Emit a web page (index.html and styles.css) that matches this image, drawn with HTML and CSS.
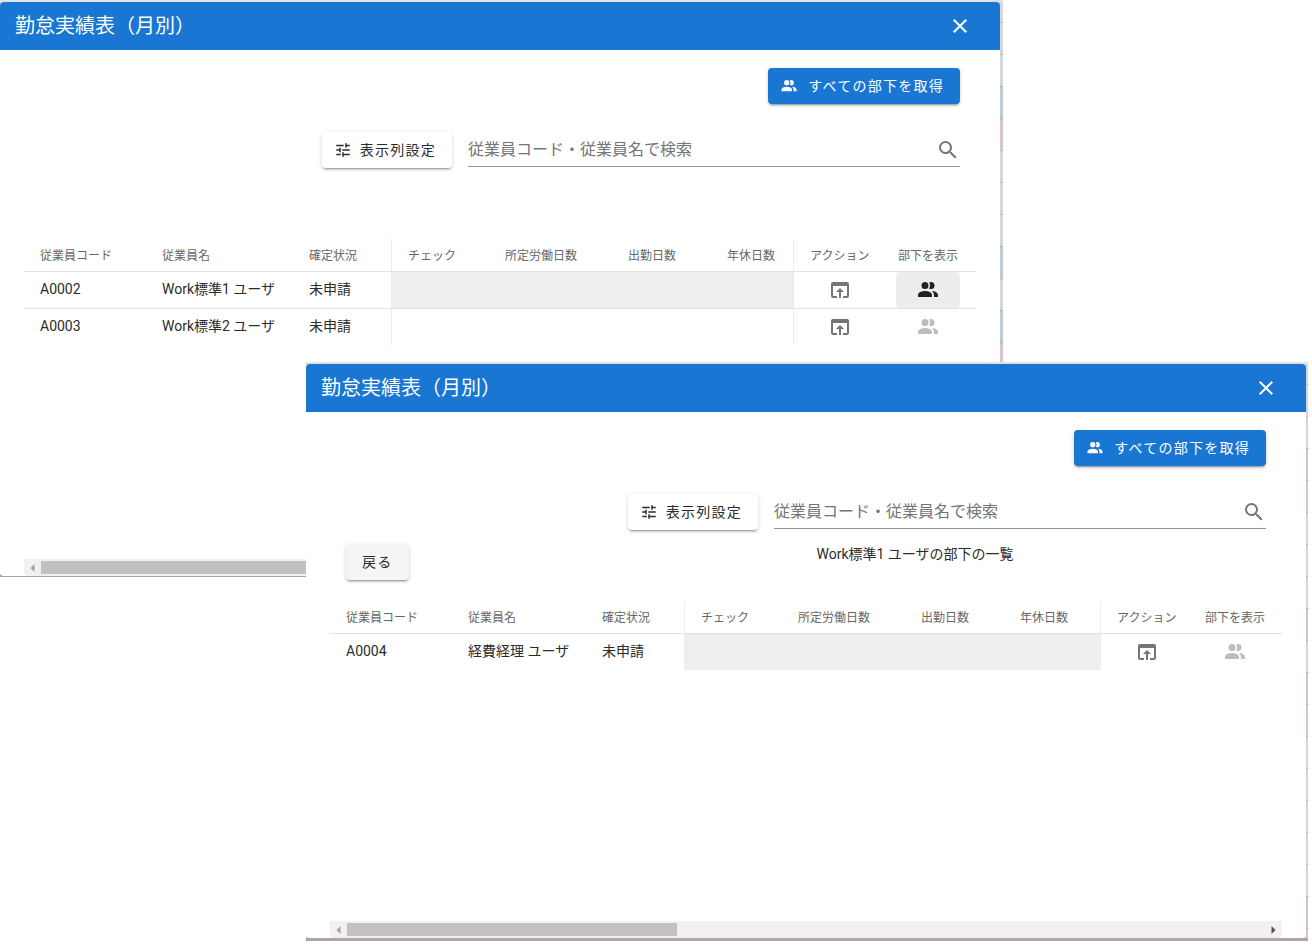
FILE: index.html
```html
<!DOCTYPE html>
<html lang="ja">
<head>
<meta charset="utf-8">
<meta name="viewport" content="width=device-width, initial-scale=1">
<title>勤怠実績表（月別）</title>
<link rel="stylesheet" href="styles.css">
</head>
<body>
<svg class="sprite" aria-hidden="true">
  <symbol id="i-close" viewBox="0 0 24 24"><path d="M19,6.41L17.59,5L12,10.59L6.41,5L5,6.41L10.59,12L5,17.59L6.41,19L12,13.41L17.59,19L19,17.59L13.41,12L19,6.41Z"/></symbol>
  <symbol id="i-people" viewBox="0 0 24 24"><path d="M16 17V19H2V17S2 13 9 13 16 17 16 17M12.5 7.5A3.5 3.5 0 1 0 9 11A3.5 3.5 0 0 0 12.5 7.5M15.94 13A5.32 5.32 0 0 1 18 17V19H22V17S22 13.37 15.94 13M15 4A3.39 3.39 0 0 0 13.07 4.59A5 5 0 0 1 13.07 10.41A3.39 3.39 0 0 0 15 11A3.5 3.5 0 0 0 15 4Z"/></symbol>
  <symbol id="i-tune" viewBox="0 0 24 24"><path d="M3,17V19H9V17H3M3,5V7H13V5H3M13,21V19H21V17H13V15H11V21H13M7,9V11H3V13H7V15H9V9H7M21,13V11H11V13H21M15,9H17V7H21V5H17V3H15V9Z"/></symbol>
  <symbol id="i-search" viewBox="0 0 24 24"><path d="M9.5,3A6.5,6.5 0 0,1 16,9.5C16,11.11 15.41,12.59 14.44,13.73L14.71,14H15.5L20.5,19L19,20.5L14,15.5V14.71L13.73,14.44C12.59,15.41 11.11,16 9.5,16A6.5,6.5 0 0,1 3,9.5A6.5,6.5 0 0,1 9.5,3M9.5,5C7,5 5,7 5,9.5C5,12 7,14 9.5,14C12,14 14,12 14,9.5C14,7 12,5 9.5,5Z"/></symbol>
  <symbol id="i-open" viewBox="0 0 24 24"><path d="M12,10L8,14H11V20H13V14H16M19,4H5C3.89,4 3,4.9 3,6V18A2,2 0 0,0 5,20H9V18H5V8H19V18H15V20H19A2,2 0 0,0 21,18V6A2,2 0 0,0 19,4Z"/></symbol>
  <symbol id="i-left" viewBox="0 0 16 16"><path d="M10 4V12L6 8Z"/></symbol>
  <symbol id="i-right" viewBox="0 0 16 16"><path d="M6 4V12L10 8Z"/></symbol>
</svg>

<div class="frame frame-all">
  <section class="dialog" role="dialog" aria-labelledby="title-all">
    <header class="bar">
      <h2 class="title" id="title-all">勤怠実績表（月別）</h2>
      <button class="close" type="button" aria-label="閉じる"><svg class="icon"><use href="#i-close"/></svg></button>
    </header>
    <div class="tools">
      <button class="btn btn-primary" type="button"><svg class="icon icon-small"><use href="#i-people"/></svg>すべての部下を取得</button>
    </div>
    <div class="tools tools-search">
      <button class="btn" type="button"><svg class="icon icon-small"><use href="#i-tune"/></svg>表示列設定</button>
      <label class="search">
        <input class="search-input" type="text" aria-label="従業員コード・従業員名で検索" placeholder="従業員コード・従業員名で検索">
        <svg class="icon"><use href="#i-search"/></svg>
      </label>
    </div>
    <div class="subhead"></div>
    <div class="table-area">
      <table class="grid grid-all">
        <colgroup><col class="c-code"><col class="c-name"><col class="c-state"><col class="c-check"><col class="c-work"><col class="c-attend"><col class="c-leave"><col class="c-action"><col></colgroup>
        <thead>
          <tr><th>従業員コード</th><th>従業員名</th><th>確定状況</th><th class="edge">チェック</th><th>所定労働日数</th><th>出勤日数</th><th>年休日数</th><th class="edge">アクション</th><th>部下を表示</th></tr>
        </thead>
        <tbody>
          <tr>
            <td>A0002</td><td>Work標準1 ユーザ</td><td>未申請</td>
            <td class="edge off"></td><td class="off"></td><td class="off"></td><td class="off"></td>
            <td class="edge act"><button class="cell-btn" type="button" aria-label="開く"><svg class="icon"><use href="#i-open"/></svg></button></td>
            <td class="act"><button class="cell-btn active" type="button" aria-label="部下を表示"><svg class="icon"><use href="#i-people"/></svg></button></td>
          </tr>
          <tr>
            <td>A0003</td><td>Work標準2 ユーザ</td><td>未申請</td>
            <td class="edge"></td><td></td><td></td><td></td>
            <td class="edge act"><button class="cell-btn" type="button" aria-label="開く"><svg class="icon"><use href="#i-open"/></svg></button></td>
            <td class="act"><button class="cell-btn" type="button" disabled aria-label="部下を表示"><svg class="icon"><use href="#i-people"/></svg></button></td>
          </tr>
        </tbody>
      </table>
    </div>
    <div class="scrollbar" aria-hidden="true">
      <svg class="arrow arrow-off"><use href="#i-left"/></svg>
      <div class="track"><div class="thumb"></div></div>
      <svg class="arrow"><use href="#i-right"/></svg>
    </div>
  </section>
</div>

<div class="frame frame-sub">
  <section class="dialog" role="dialog" aria-labelledby="title-sub">
    <header class="bar">
      <h2 class="title" id="title-sub">勤怠実績表（月別）</h2>
      <button class="close" type="button" aria-label="閉じる"><svg class="icon"><use href="#i-close"/></svg></button>
    </header>
    <div class="tools">
      <button class="btn btn-primary" type="button"><svg class="icon icon-small"><use href="#i-people"/></svg>すべての部下を取得</button>
    </div>
    <div class="tools tools-search">
      <button class="btn" type="button"><svg class="icon icon-small"><use href="#i-tune"/></svg>表示列設定</button>
      <label class="search">
        <input class="search-input" type="text" aria-label="従業員コード・従業員名で検索" placeholder="従業員コード・従業員名で検索">
        <svg class="icon"><use href="#i-search"/></svg>
      </label>
    </div>
    <div class="subhead">
      <div class="back"><button class="btn btn-back" type="button">戻る</button></div>
      <p class="subtitle">Work標準1 ユーザの部下の一覧</p>
    </div>
    <div class="table-area">
      <table class="grid grid-sub">
        <colgroup><col class="c-code"><col class="c-name"><col class="c-state"><col class="c-check"><col class="c-work"><col class="c-attend"><col class="c-leave"><col class="c-action"><col></colgroup>
        <thead>
          <tr><th>従業員コード</th><th>従業員名</th><th>確定状況</th><th class="edge">チェック</th><th>所定労働日数</th><th>出勤日数</th><th>年休日数</th><th class="edge">アクション</th><th>部下を表示</th></tr>
        </thead>
        <tbody>
          <tr>
            <td>A0004</td><td>経費経理 ユーザ</td><td>未申請</td>
            <td class="edge off"></td><td class="off"></td><td class="off"></td><td class="off"></td>
            <td class="edge act"><button class="cell-btn" type="button" aria-label="開く"><svg class="icon"><use href="#i-open"/></svg></button></td>
            <td class="act"><button class="cell-btn" type="button" disabled aria-label="部下を表示"><svg class="icon"><use href="#i-people"/></svg></button></td>
          </tr>
        </tbody>
      </table>
    </div>
    <div class="scrollbar" aria-hidden="true">
      <svg class="arrow arrow-off"><use href="#i-left"/></svg>
      <div class="track"><div class="thumb"></div></div>
      <svg class="arrow"><use href="#i-right"/></svg>
    </div>
  </section>
</div>
</body>
</html>
```

FILE: styles.css
```css
* { box-sizing: border-box; }

body {
  margin: 0;
  background: #fff;
  color: #2b2b2b;
  font-family: Roboto, "Noto Sans CJK JP", sans-serif;
  font-size: 14px;
  line-height: 20px;
}

button, input { font: inherit; color: inherit; }
button { cursor: pointer; }

.sprite { display: none; }

.icon {
  display: block;
  flex: none;
  width: 24px;
  height: 24px;
  fill: currentColor;
}
.icon-small { width: 18px; height: 18px; }

/* Each window sits over a dimmed calendar, visible as a thin rim. */
.frame {
  position: absolute;
  background-color: #d6d6d6;
  background-image:
    linear-gradient(#e2e2e2, #e2e2e2),
    linear-gradient(#b3a3a7, #b3a3a7),
    linear-gradient(transparent 86px, #bccbd9 86px 118px, #d9c6cb 118px 150px, transparent 150px 246px, #bccbd9 246px 278px, transparent 278px 310px, #bccbd9 310px 342px, #d9c6cb 342px 374px, transparent 374px 534px, #bccbd9 534px 566px, #d9c6cb 566px);
  background-size: 100% 2px, 100% 3px, 100% 100%;
  background-position: top, bottom, top;
  background-repeat: no-repeat;
}
.frame::after {
  content: "";
  position: absolute;
  top: 22px;
  right: 0;
  bottom: 0;
  width: 3px;
  background: repeating-linear-gradient(rgba(0, 0, 0, .15) 0 1px, transparent 1px 32px);
}
.frame-all { top: 0; left: 0; right: 309px; padding: 2px 3px 1px 0; }
.frame-sub { top: 362px; left: 306px; right: 4px; padding: 2px 2px 3px 0; }
.frame-sub::after { width: 2px; }

.dialog {
  background: #fff;
  border-radius: 4px;
  overflow: hidden;
}

.bar {
  display: flex;
  align-items: center;
  justify-content: space-between;
  height: 48px;
  padding: 0 28px 0 15px;
  background: #1976d2;
  color: #fff;
}
.title { margin: 0; font-size: 20px; line-height: 32px; font-weight: 400; }
.close {
  padding: 0;
  border: 0;
  background: none;
}

.tools {
  display: flex;
  justify-content: flex-end;
  padding: 18px 40px 0 24px;
}
.tools-search { gap: 16px; padding-top: 28px; }

.btn {
  display: flex;
  align-items: center;
  gap: 8px;
  height: 36px;
  padding: 0 16px 0 12px;
  border: 0;
  border-radius: 4px;
  background: #fff;
  letter-spacing: .09em;
  white-space: nowrap;
  box-shadow: 0 3px 1px -2px rgba(0, 0, 0, .2), 0 2px 2px 0 rgba(0, 0, 0, .14), 0 1px 5px 0 rgba(0, 0, 0, .12);
}
.btn-primary { gap: 10px; padding-left: 12px; background: #1976d2; color: #fff; }
.btn-back { padding: 0 16px; background: #f5f5f5; }

.search {
  display: flex;
  align-items: center;
  flex: 0 0 492px;
  height: 35px;
  padding-top: 2px;
  border-bottom: 1px solid #949494;
  color: #757575;
}
.search-input {
  flex: 1;
  min-width: 0;
  padding: 0;
  border: 0;
  outline: 0;
  background: none;
  font-size: 16px;
}
.search-input::placeholder { color: #757575; opacity: 1; }

.subhead {
  display: grid;
  grid-template-columns: 1fr 3fr;
  min-height: 71px;
  padding: 14px 40px 21px 24px;
}
.back { padding-left: 16px; display: flex; }
.subtitle { margin: 0; text-align: center; }

.table-area { min-height: 320px; padding: 0 24px; }

.grid {
  width: 100%;
  table-layout: fixed;
  border-collapse: separate;
  border-spacing: 0;
}
.grid th {
  height: 33px;
  padding: 2px 0 0 16px;
  border-bottom: 1px solid #e0e0e0;
  color: #666;
  font-size: 12px;
  font-weight: 400;
  text-align: left;
  white-space: nowrap;
}
.grid td {
  height: 37px;
  padding: 0 0 2px 16px;
  white-space: nowrap;
}
.grid tr:not(:last-child) td { border-bottom: 1px solid #e0e0e0; }
.grid tr:last-child td { height: 36px; }
.grid .edge { border-left: 1px solid #ededed; }
.grid .off { background: #eee; }
.grid .act { padding: 0 0 0 14px; }

.c-code { width: 122px; }
.c-name { width: 147px; }
.c-state { width: 98px; }
.c-check { width: 98px; }
.c-work { width: 123px; }
.c-attend { width: 99px; }
.c-leave { width: 82px; }
.c-action { width: 89px; }
.grid-sub .c-name { width: 134px; }
.grid-sub .c-leave { width: 96px; }

.cell-btn {
  display: flex;
  align-items: center;
  justify-content: center;
  width: 64px;
  height: 36px;
  padding: 0;
  border: 0;
  border-radius: 4px;
  background: none;
  color: #757575;
}
.cell-btn.active { background: #ededed; color: #212121; }
.cell-btn:disabled { color: #bdbdbd; }

.scrollbar {
  display: flex;
  align-items: center;
  height: 17px;
  margin: 0 24px;
  border-radius: 0 0 4px 4px;
  background: #f1f1f1;
}
.arrow { flex: none; width: 17px; height: 16px; fill: #505050; }
.arrow-off { fill: #a3a3a3; }
.track { flex: 1; }
.thumb { width: 36%; height: 13px; background: #c1c1c1; }
```
